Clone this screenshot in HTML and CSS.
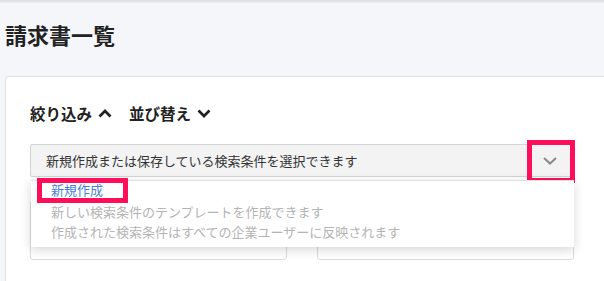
FILE: index.html
```html
<!DOCTYPE html>
<html lang="ja">
<head>
<meta charset="utf-8">
<link rel="stylesheet" href="styles.css">
</head>
<body>
<div class="topbar"></div>
<h1 class="title">請求書一覧</h1>
<section class="card">
  <div class="toolbar">
    <span class="tool">絞り込み
      <svg class="chev" width="14" height="9" viewBox="0 0 14 9"><path d="M1.5 7.5 L7 2 L12.5 7.5" fill="none" stroke="#222" stroke-width="2.7"/></svg>
    </span>
    <span class="tool">並び替え
      <svg class="chev" width="14" height="9" viewBox="0 0 14 9"><path d="M1.5 1.5 L7 7 L12.5 1.5" fill="none" stroke="#222" stroke-width="2.7"/></svg>
    </span>
  </div>
  <div class="selectwrap">
    <div class="select">
      <span class="select-text">新規作成または保存している検索条件を選択できます</span>
      <svg class="select-chev" width="14" height="8" viewBox="0 0 14 8"><path d="M1 1 L7 6.5 L13 1" fill="none" stroke="#8c8c8c" stroke-width="2.2"/></svg>
    </div>
    <div class="mark mark-chev"></div>
    <div class="menu">
      <div class="menu-item new">新規作成</div>
      <div class="menu-item note">新しい検索条件のテンプレートを作成できます</div>
      <div class="menu-item note">作成された検索条件はすべての企業ユーザーに反映されます</div>
      <div class="mark mark-new"></div>
    </div>
    <div class="fields">
      <div class="field"></div>
      <div class="field"></div>
    </div>
  </div>
</section>
</body>
</html>
```

FILE: styles.css
```css
html, body {
  margin: 0;
  padding: 0;
}
body {
  width: 604px;
  height: 281px;
  overflow: hidden;
  background: #f5f6fa;
  font-family: "Noto Sans CJK JP", "Noto Sans", sans-serif;
  color: #222;
}
.topbar {
  height: 3px;
  background: linear-gradient(#dcdce0, #eeeef2);
}
.title {
  margin: 0;
  padding: 16px 0 0 5px;
  height: 56px;
  box-sizing: border-box;
  font-size: 22px;
  line-height: 30px;
  font-weight: 700;
  color: #222;
}
.card {
  margin: 17px -20px 0 5px;
  background: #fff;
  border: 1px solid #e0e0e4;
  border-bottom: 0;
  border-radius: 4px 4px 0 0;
  padding: 21px 0 0 24px;
  height: 205px;
  box-sizing: border-box;
}
.toolbar {
  display: flex;
  gap: 17px;
  height: 30px;
  align-items: center;
}
.tool {
  display: flex;
  align-items: center;
  gap: 6px;
  font-size: 15.5px;
  font-weight: 700;
  color: #222;
}
.selectwrap {
  position: relative;
  width: 544px;
  margin-top: 16px;
}
.select {
  height: 33px;
  box-sizing: border-box;
  background: #f3f3f3;
  border: 1px solid #d4d4d4;
  border-radius: 2px;
  display: flex;
  align-items: center;
  padding: 0 18px 0 15px;
  justify-content: space-between;
}
.select-text {
  font-size: 13px;
  color: #333;
}
.select-chev {
  margin-right: -2px;
}
.mark {
  position: absolute;
  border: 5px solid #ff0f5a;
  box-sizing: border-box;
}
.mark-chev {
  left: 497px;
  top: -4px;
  width: 48px;
  height: 43px;
}
.menu {
  position: absolute;
  left: 1px;
  top: 36px;
  width: 543px;
  box-sizing: border-box;
  background: #fff;
  border-top: 1px solid #e2e2e2;
  box-shadow: 0 3px 10px rgba(0, 0, 0, 0.16);
  padding: 0 0 5px 20px;
  z-index: 2;
}
.menu-item {
  font-size: 13px;
  line-height: 20px;
}
.menu-item.new {
  color: #4a7fd8;
  line-height: 17px;
  padding-bottom: 4px;
}
.menu-item.note {
  color: #b4b4b4;
}
.mark-new {
  left: 6px;
  top: -3px;
  width: 91px;
  height: 25px;
}
.fields {
  display: flex;
  gap: 30px;
  margin-top: 23px;
}
.field {
  width: 257px;
  height: 60px;
  box-sizing: border-box;
  border: 1px solid #dcdcdc;
  border-radius: 3px;
  background: #fff;
}
```
